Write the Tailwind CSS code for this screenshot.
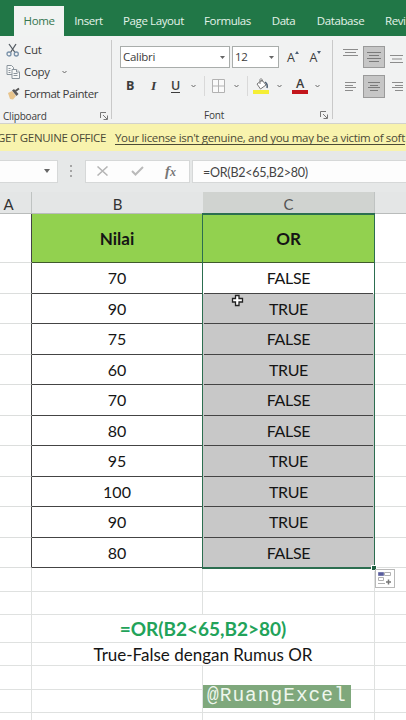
<!DOCTYPE html>
<html lang="id">

<head>
    <meta charset="UTF-8">
    <meta name="viewport" content="width=device-width, initial-scale=1.0">
    <title>Rumus OR</title>
    <script src="https://cdn.jsdelivr.net/npm/@tailwindcss/browser@4"></script>
</head>

<body class="w-[406px] h-[720px] overflow-hidden bg-white font-['Open_Sans','Noto_Sans',sans-serif] text-[#3c3c3c]">
    <!-- Tabs -->
    <nav class="flex h-9 pl-3.5 pt-1.5 bg-[#217747] overflow-hidden text-[11.5px] tracking-[-0.4px] text-[#e4f3e9] whitespace-nowrap *:shrink-0">
        <a class="w-[50px] h-[30px] leading-[30px] text-center bg-[#f1f3f2] text-[#35764f]">Home</a>
        <a class="w-[49px] leading-[30px] text-center">Insert</a>
        <a class="w-[81px] leading-[30px] text-center">Page Layout</a>
        <a class="w-[67px] leading-[30px] text-center">Formulas</a>
        <a class="w-[45px] leading-[30px] text-center">Data</a>
        <a class="w-[69px] leading-[30px] text-center">Database</a>
        <a class="leading-[30px] pl-2.5">Revi</a>
    </nav>

    <!-- Ribbon -->
    <div class="flex h-[88px] pt-1 bg-[#f1f2f2] border-b border-[#d2d2cc] text-[11.5px] tracking-[-0.3px] whitespace-nowrap">
        <section class="w-28 h-[79px] border-r border-[#c9c9c9] flex flex-col *:shrink-0">
            <div class="flex items-center h-[19px] pl-1.5">
                <svg class="w-[14px] h-[14px] mr-[4px]" viewBox="0 0 14 14" fill="none" stroke-width="1.3">
                    <path d="M3 1l6 8.5M10 1L4.5 9.5" stroke="#555c63" />
                    <circle cx="3" cy="11" r="2" stroke="#7890a8" />
                    <circle cx="10.3" cy="11" r="2" stroke="#7890a8" />
                </svg>
                <span>Cut</span>
            </div>
            <div class="flex items-center h-[25px] pl-1.5">
                <svg class="w-[14px] h-[14px] mr-[4px]" viewBox="0 0 14 14" fill="#f7f8f8" stroke="#8a949c">
                    <path d="M1 .5h4.5l2 2v7H1z" />
                    <path d="M2.5 3.5h2M2.5 5.5h2M2.5 7.5h2" />
                    <path d="M6 4.5h4.5l3 2.5v6.5H6z" />
                    <path d="M10.5 4.5v2.5h3M7.5 8.5h4M7.5 10.5h4" />
                </svg>
                <span>Copy</span>
                <svg class="w-[5px] h-[4px] ml-[12px]" viewBox="0 0 5 4" fill="none" stroke="#666"><path d="M.5 1l2 2 2-2" /></svg>
            </div>
            <div class="flex items-center h-[19px] pl-[7px]">
                <svg class="w-[14px] h-[13px] mr-[3px]" viewBox="0 0 14 13">
                    <path d="M1 6l4-2 4 5-3 3.5-3-.5z" fill="#e8c48c" />
                    <path d="M5 3.5l2-1.5 4.5 5-2 2z" fill="#5b5858" />
                    <path d="M8.5 4L12 1.5" stroke="#555" stroke-width="2" />
                </svg>
                <span class="tracking-[-0.45px]">Format Painter</span>
            </div>
            <div class="flex items-center justify-between h-[16px] mt-[5px] pl-[3px] pr-[3px] text-[10px] leading-[16px] tracking-[-0.2px]">
                <span>Clipboard</span>
                <svg class="w-2 h-2" viewBox="0 0 8 8" fill="none" stroke="#777"><path d="M.5 6V.5H6M3 3l4 4M7.5 3.5v4h-4" /></svg>
            </div>
        </section>

        <section class="w-[221px] h-[79px] border-r border-[#c9c9c9] flex flex-col pt-[6px] pl-2 *:shrink-0">
            <div class="flex items-center h-[22px] leading-[20px]">
                <div class="w-[110px] h-[22px] flex items-center justify-between pl-[2px] pr-[4px] bg-white border border-[#a9adab]">
                    <span>Calibri</span>
                    <svg class="w-[5px] h-[3px]" viewBox="0 0 5 3"><path d="M0 0h5L2.5 3z" fill="#666" /></svg>
                </div>
                <div class="w-[47px] h-[22px] ml-[2px] flex items-center justify-between pl-[2px] pr-[4px] bg-white border border-[#a9adab]">
                    <span>12</span>
                    <svg class="w-[5px] h-[3px]" viewBox="0 0 5 3"><path d="M0 0h5L2.5 3z" fill="#666" /></svg>
                </div>
                <div class="flex items-start ml-[8px] pt-[2px] text-[12.5px]">
                    <span>A</span>
                    <svg class="w-[4px] h-[3px] mt-[3px]" viewBox="0 0 4 3"><path d="M0 3h4L2 0z" fill="#4a5f78" /></svg>
                    <span class="ml-[11px]">A</span>
                    <svg class="w-[4px] h-[3px] mt-[3px]" viewBox="0 0 4 3"><path d="M0 0h4L2 3z" fill="#4a5f78" /></svg>
                </div>
            </div>
            <div class="flex items-center h-[24px] mt-[6px] text-[12.5px]">
                <b class="w-[26px] pl-[6px]">B</b>
                <i class="w-[21px] pl-[5px] font-bold font-['Liberation_Serif',serif] text-[13.5px]">I</i>
                <span class="w-[18px] pl-[4px] underline underline-offset-2 font-semibold">U</span>
                <svg class="w-[5px] h-[4px] ml-[6px]" viewBox="0 0 5 4" fill="none" stroke="#666"><path d="M.5 1l2 2 2-2" /></svg>
                <div class="w-px h-5 ml-[8px] bg-[#d9d9d9]"></div>
                <svg class="w-[13px] h-[14px] ml-[7px]" viewBox="0 0 13 14" fill="#fafafa" stroke="#b2b2b2">
                    <path d="M.5.5h12v13H.5zM6.5.5v13M.5 7h12" />
                </svg>
                <svg class="w-[5px] h-[4px] ml-[9px]" viewBox="0 0 5 4" fill="none" stroke="#666"><path d="M.5 1l2 2 2-2" /></svg>
                <div class="w-px h-5 ml-[8px] bg-[#d9d9d9]"></div>
                <svg class="w-[16px] h-[18px] ml-[5px]" viewBox="0 0 16 18">
                    <path d="M4 7l5-4 4 5-5.5 4z" fill="#fff" stroke="#777" />
                    <path d="M7 7V2.5q1-2 2 0V5" fill="none" stroke="#777" />
                    <path d="M12 5q3 2 2 6" fill="none" stroke="#4b5c70" stroke-width="1.5" />
                    <path d="M0 13h16v4H0z" fill="#f5ee35" />
                </svg>
                <svg class="w-[5px] h-[4px] ml-[8px]" viewBox="0 0 5 4" fill="none" stroke="#666"><path d="M.5 1l2 2 2-2" /></svg>
                <div class="w-[16px] h-[18px] ml-[10px] pb-px flex flex-col items-center justify-end">
                    <span class="text-[12.5px] leading-[13px] font-semibold">A</span>
                    <div class="w-[16px] h-[4px] bg-[#c3161c]"></div>
                </div>
                <svg class="w-[5px] h-[4px] ml-[7px]" viewBox="0 0 5 4" fill="none" stroke="#666"><path d="M.5 1l2 2 2-2" /></svg>
            </div>
            <div class="flex items-center h-[16px] mt-[9px] pr-[4px] text-[10px] leading-[16px] tracking-[-0.2px]">
                <span class="ml-[84px]">Font</span>
                <svg class="w-2 h-2 ml-auto" viewBox="0 0 8 8" fill="none" stroke="#777"><path d="M.5 6V.5H6M3 3l4 4M7.5 3.5v4h-4" /></svg>
            </div>
        </section>

        <section class="flex-1 flex flex-col pt-[6px] pl-[10px] overflow-hidden">
            <div class="flex h-[22px]">
                <svg class="w-[15px] h-[22px] shrink-0" viewBox="0 0 15 22" stroke="#8c8c8c"><path d="M0 3.5h15M2 6.5h11M0 9.5h15" /></svg>
                <div class="w-[22px] h-[22px] ml-[5px] shrink-0 bg-[#c6c6c6] border border-[#9a9a9a]">
                    <svg class="w-5 h-5" viewBox="0 0 20 20" stroke="#7a7a7a"><path d="M3 5.5h14M5 8.5h10M3 11.5h14M5 14.5h10" /></svg>
                </div>
                <svg class="w-[13px] h-[22px] ml-[5px] shrink-0" viewBox="0 0 13 22" stroke="#8c8c8c"><path d="M0 9.5h13M2 13h10M0 16.5h13" /></svg>
            </div>
            <div class="flex h-[23px] mt-[7px]">
                <svg class="w-[15px] h-[23px] shrink-0" viewBox="0 0 15 23" stroke="#8c8c8c"><path d="M2 7.5h11M2 10.5h8M2 12.5h11M2 15.5h8" /></svg>
                <div class="w-[22px] h-[23px] ml-[5px] shrink-0 bg-[#c6c6c6] border border-[#9a9a9a]">
                    <svg class="w-5 h-[21px]" viewBox="0 0 20 21" stroke="#7a7a7a"><path d="M4 6.5h12M6 9.5h8M4 11.5h12M6 14.5h8" /></svg>
                </div>
                <svg class="w-[13px] h-[23px] ml-[5px] shrink-0" viewBox="0 0 13 23" stroke="#8c8c8c"><path d="M2 7.5h11M5 10.5h8M2 12.5h11M5 15.5h8" /></svg>
            </div>
        </section>
    </div>

    <!-- License warning -->
    <div class="flex items-center h-[27px] pt-px bg-[#f8f3ad] overflow-hidden text-[11.5px] tracking-[-0.32px] whitespace-nowrap text-[#4c4a36]">
        <span class="w-[118px] ml-[-3px] shrink-0">GET GENUINE OFFICE</span>
        <span class="underline underline-offset-2">Your license isn't genuine, and you may be a victim of soft</span>
    </div>

    <!-- Formula bar -->
    <div class="flex items-center h-[41px] pb-px bg-[#e6e8e8]">
        <div class="w-[58px] h-[23px] flex items-center justify-end pr-[7px] bg-[#fdfdfd] border border-l-0 border-[#d6d8d8]">
            <svg class="w-[6px] h-[4px]" viewBox="0 0 6 4"><path d="M0 0h6L3 4z" fill="#666" /></svg>
        </div>
        <svg class="w-[2px] h-[12px] ml-[12px]" viewBox="0 0 2 12" fill="#a5a5a5"><path d="M0 0h2v2H0zM0 5h2v2H0zM0 10h2v2H0z" /></svg>
        <div class="w-[105px] h-[23px] ml-[13px] flex items-center bg-[#fdfdfd] border border-[#d6d8d8]">
            <svg class="w-[11px] h-[10px] ml-[11px]" viewBox="0 0 11 10" stroke="#b5b5b5" stroke-width="1.5"><path d="M.5.5l10 9M10.5.5l-10 9" /></svg>
            <svg class="w-[13px] h-[10px] ml-[23px]" viewBox="0 0 13 10" fill="none" stroke="#bababa" stroke-width="2"><path d="M1 5l3.5 3.5L12 1" /></svg>
            <i class="ml-[21px] font-['Liberation_Serif',serif] font-bold text-[15px] leading-none text-[#777]">f<span class="text-[12px]">x</span></i>
        </div>
        <div class="flex-1 h-[23px] ml-[2px] pl-[10px] leading-[23px] bg-[#fdfdfd] border border-r-0 border-[#d6d8d8] font-[Lato,sans-serif] text-[12.5px] tracking-[-0.25px] text-[#444]">=OR(B2&lt;65,B2&gt;80)</div>
    </div>

    <!-- Sheet -->
    <main class="relative font-[Lato,sans-serif] text-[#151515]">
        <div class="grid grid-cols-[32px_171px_172px_1fr] grid-rows-[100%] h-[22px] bg-[#e4e6e6] border-b border-[#b9bcbb] text-center text-[15px] leading-[24px] text-[#333]">
            <div class="border-r border-[#bfc3c2] pr-[14px]">A</div>
            <div>B</div>
            <div class="bg-[#d0d3d0] border-r border-[#bfc3c2] text-[#555]">C</div>
            <div></div>
        </div>
        <div class="grid grid-cols-[32px_171px_172px_1fr] grid-rows-[100%] h-[49px] text-center text-[17px] leading-[50px] font-bold">
            <div class="border-r border-r-[#444] border-b border-b-[#dcdedd]"></div>
            <div class="bg-[#92d14f] border-r border-b border-[#3f5a2c]">Nilai</div>
            <div class="bg-[#92d14f] border-r border-b border-[#3f5a2c]">OR</div>
            <div class="border-b border-[#dcdedd]"></div>
        </div>
        <div id="filas"></div>
        <div class="grid grid-cols-[32px_171px_172px_1fr] h-[23.5px] *:border-b *:border-r *:last:border-r-0 *:border-[#dfe1e0]"><div></div><div></div><div></div><div></div></div>
        <div class="grid grid-cols-[32px_171px_172px_1fr] h-[23.5px] *:border-b *:border-r *:last:border-r-0 *:border-[#dfe1e0]"><div></div><div></div><div></div><div></div></div>
        <div class="grid grid-cols-[32px_343px_1fr] grid-rows-[100%] h-[27.5px] *:border-b *:border-r *:last:border-r-0 *:border-[#dfe1e0] text-center">
            <div></div>
            <div class="text-[19px] leading-[28px] font-bold text-[#22a35a] whitespace-nowrap">=OR(B2&lt;65,B2&gt;80)</div>
            <div></div>
        </div>
        <div class="grid grid-cols-[32px_343px_1fr] grid-rows-[100%] h-[23.5px] *:border-b *:border-r *:last:border-r-0 *:border-[#dfe1e0] text-center">
            <div></div>
            <div class="text-[17px] leading-[23px] whitespace-nowrap">True-False dengan Rumus OR</div>
            <div></div>
        </div>
        <div class="grid grid-cols-[32px_171px_172px_1fr] h-[23.5px] *:border-b *:border-r *:last:border-r-0 *:border-[#dfe1e0]"><div></div><div></div><div></div><div></div></div>
        <div class="grid grid-cols-[32px_171px_172px_1fr] h-[23.5px] *:border-b *:border-r *:last:border-r-0 *:border-[#dfe1e0]"><div></div><div></div><div></div><div></div></div>
        <div class="grid grid-cols-[32px_171px_172px_1fr] h-[7px] *:border-r *:last:border-r-0 *:border-[#dfe1e0]"><div></div><div></div><div></div><div></div></div>

        <!-- Selection, fill handle and autofill button -->
        <div class="absolute left-[202px] top-[21px] w-[173px] h-[356px] border-y-2 border-x border-[#2c6e50]"></div>
        <div class="absolute left-[372px] top-[374px] w-1 h-1 bg-[#1f6041] outline outline-white"></div>
        <div class="absolute left-[375px] top-[377px] w-[20px] h-[19px] bg-white border border-[#b9b9b9]">
            <svg class="w-[18px] h-[17px]" viewBox="0 0 18 17" fill="none" stroke="#b0b0b0">
                <path d="M8.5 2.5h6v3h-6zM2.5 7.5h5v3h-5zM2 13.5h7" />
                <path d="M2.5 2.5h5v3h-5z" fill="#5a5d9c" stroke="#777bb0" />
                <path d="M12.5 9.5v5M10 12h5" stroke="#777" stroke-width="1.5" />
            </svg>
        </div>
        <svg class="absolute left-[231px] top-[102px] w-[13px] h-[13px]" viewBox="0 0 13 13">
            <path d="M4.5 1.5h3.5v3h3.5V8H8v3.5H4.5V8h-3V4.5h3z" fill="#fff" stroke="#222" stroke-width="1.3" />
        </svg>
        <div class="absolute left-[203px] top-[493px] w-[148px] h-[23px] pl-[4px] bg-[#7fa87c] text-[19.5px] leading-[23px] tracking-[1px] text-[#eef6ec] font-['Liberation_Mono',monospace]">@RuangExcel</div>
    </main>

    <script>
        const datos = [
            [70, 'FALSE'], [90, 'TRUE'], [75, 'FALSE'], [60, 'TRUE'], [70, 'FALSE'],
            [80, 'FALSE'], [95, 'TRUE'], [100, 'TRUE'], [90, 'TRUE'], [80, 'FALSE']
        ];
        const filas = document.getElementById("filas");

        datos.forEach(([nilai, hasil], i) => {
            const fila = document.createElement("div");
            fila.className = "grid grid-cols-[32px_171px_172px_1fr] grid-rows-[100%] h-[30.5px] text-center text-[16px] leading-[30px]";
            // la primera celda es la activa, queda en blanco
            const fondo = i === 0 ? "bg-white" : "bg-[#c8c8c8]";
            fila.innerHTML = `
                <div class="border-r border-r-[#444] border-b border-b-[#dcdedd]"></div>
                <div class="border-r border-b border-[#444]">${nilai}</div>
                <div class="${fondo} flex pl-px pr-[2px]">
                    <div class="flex-1 border-b border-[#444] tracking-[-0.35px]">${hasil}</div>
                </div>
                <div class="border-b border-[#dcdedd]"></div>
            `;
            filas.appendChild(fila);
        });
    </script>
</body>

</html>
